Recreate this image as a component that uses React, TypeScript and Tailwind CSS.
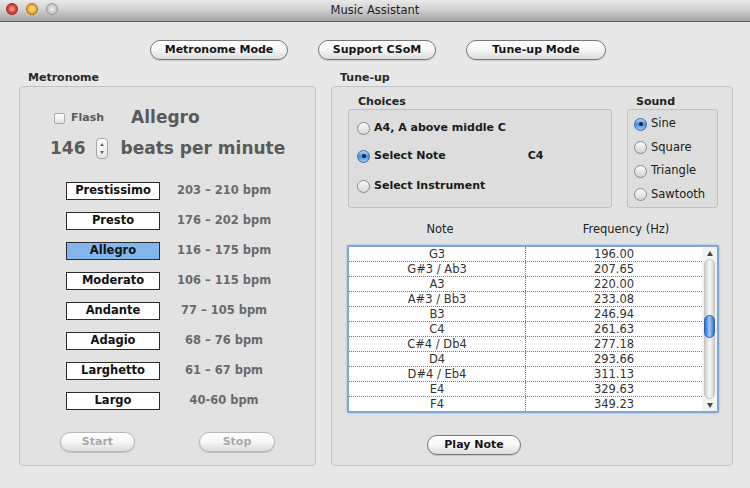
import React from "react";

const tempos: [string, string, boolean?][] = [
  ["Prestissimo", "203 – 210 bpm"],
  ["Presto", "176 – 202 bpm"],
  ["Allegro", "116 – 175 bpm", true],
  ["Moderato", "106 – 115 bpm"],
  ["Andante", "77 – 105 bpm"],
  ["Adagio", "68 – 76 bpm"],
  ["Larghetto", "61 – 67 bpm"],
  ["Largo", "40-60 bpm"],
];

const notes: [string, string][] = [
  ["G3", "196.00"],
  ["G#3 / Ab3", "207.65"],
  ["A3", "220.00"],
  ["A#3 / Bb3", "233.08"],
  ["B3", "246.94"],
  ["C4", "261.63"],
  ["C#4 / Db4", "277.18"],
  ["D4", "293.66"],
  ["D#4 / Eb4", "311.13"],
  ["E4", "329.63"],
  ["F4", "349.23"],
];

function AquaButton({
  children,
  className,
  disabled,
}: {
  children: React.ReactNode;
  className: string;
  disabled?: boolean;
}) {
  return (
    <div
      className={
        "h-[20px] rounded-full border flex items-center justify-center text-[11px] font-bold bg-linear-to-b from-white via-[#f6f6f6] to-[#dcdcdc] shadow-[0_1px_1px_rgba(0,0,0,0.15)] " +
        (disabled ? "border-[#b8b8b8] text-[#a9a9a9] " : "border-[#777777] text-[#151515] ") +
        className
      }
    >
      {children}
    </div>
  );
}

function Radio({ on }: { on?: boolean }) {
  if (on) {
    return (
      <div className="w-[13px] h-[13px] shrink-0 rounded-full border border-[#3b68a6] bg-linear-to-b from-[#b6d6f8] via-[#4a8fe0] to-[#9cc8f4] flex items-center justify-center">
        <div className="w-[4px] h-[4px] rounded-full bg-[#17263b]" />
      </div>
    );
  }
  return (
    <div className="w-[13px] h-[13px] shrink-0 rounded-full border border-[#8a8a8a] bg-linear-to-b from-[#fbfbfb] to-[#d6d6d6]" />
  );
}

export default function App() {
  return (
    <div className="w-[750px] h-[488px] bg-[#e8e8e8] flex flex-col overflow-hidden font-['DejaVu_Sans',sans-serif] select-none">
      {/* Title bar */}
      <div className="h-[22px] shrink-0 relative flex items-center justify-center bg-linear-to-b from-[#e9e9e9] via-[#cdcdcd] to-[#a4a4a4] border-b border-[#5c5c5c]">
        <div className="absolute left-[6px] top-[3px] flex gap-[8px]">
          <div className="w-[12px] h-[12px] rounded-full border border-[#9a2a25] bg-radial from-[#ffb0a8] via-[#e0443c] to-[#b21f18]" />
          <div className="w-[12px] h-[12px] rounded-full border border-[#a87212] bg-radial from-[#ffe8a0] via-[#f2b33a] to-[#cc8410]" />
          <div className="w-[12px] h-[12px] rounded-full border border-[#9a9a9a] bg-radial from-[#f0f0f0] via-[#cfcfcf] to-[#a9a9a9]" />
        </div>
        <span className="text-[11.5px] text-[#1e1e1e]">Music Assistant</span>
      </div>

      {/* Mode buttons */}
      <div className="mt-[18px] ml-[150px] flex gap-[30px]">
        <AquaButton className="w-[138px]">Metronome Mode</AquaButton>
        <AquaButton className="w-[118px]">Support CSoM</AquaButton>
        <AquaButton className="w-[140px]">Tune-up Mode</AquaButton>
      </div>

      {/* Panels */}
      <div className="mt-[11px] flex">
        {/* Metronome */}
        <div className="ml-[19px] w-[297px] flex flex-col">
          <div className="h-[14px] ml-[9px] text-[11px] font-bold text-[#2a2a2a] leading-[14px]">Metronome</div>
          <div className="mt-[1px] h-[380px] rounded-[4px] border border-[#c3c3c3] bg-[#e2e2e2] flex flex-col">
            <div className="mt-[21px] h-[20px] flex items-center">
              <div className="ml-[34px] w-[11px] h-[11px] rounded-[2px] border border-[#a9a9a9] bg-linear-to-b from-white to-[#e2e2e2]" />
              <span className="ml-[6px] text-[11px] font-bold text-[#5a5a5a]">Flash</span>
              <span className="ml-[27px] text-[17px] font-bold text-[#5a5a5a]">Allegro</span>
            </div>
            <div className="mt-[10px] h-[21px] flex items-center">
              <span className="ml-[30px] text-[17px] font-bold text-[#5a5a5a]">146</span>
              <div className="ml-[10px] w-[12px] h-[21px] rounded-[4px] border border-[#a5a5a5] bg-linear-to-b from-white to-[#e4e4e4] flex flex-col items-center justify-center gap-[5px]">
                <div className="w-0 h-0 border-l-[2.5px] border-r-[2.5px] border-b-[3px] border-l-transparent border-r-transparent border-b-[#666]" />
                <div className="w-0 h-0 border-l-[2.5px] border-r-[2.5px] border-t-[3px] border-l-transparent border-r-transparent border-t-[#666]" />
              </div>
              <span className="ml-[13px] text-[17px] font-bold text-[#5a5a5a]">beats per minute</span>
            </div>
            <div className="mt-[23px] flex flex-col gap-[12px]">
              {tempos.map(([name, range, sel]) => (
                <div key={name} className="h-[18px] flex items-center">
                  <div
                    className={
                      "ml-[46px] w-[94px] h-[18px] border border-[#2b2b2b] flex items-center justify-center text-[11.5px] font-bold text-[#111] " +
                      (sel ? "bg-[#84b6ee]" : "bg-white")
                    }
                  >
                    {name}
                  </div>
                  <div className="ml-[9px] w-[110px] text-center text-[11.5px] font-bold text-[#6a6a6a]">{range}</div>
                </div>
              ))}
            </div>
            <div className="mt-[22px] flex">
              <AquaButton disabled className="ml-[40px] w-[75px] h-[19px]">Start</AquaButton>
              <AquaButton disabled className="ml-[64px] w-[76px] h-[19px]">Stop</AquaButton>
            </div>
          </div>
        </div>

        {/* Tune-up */}
        <div className="ml-[15px] w-[402px] flex flex-col">
          <div className="h-[14px] ml-[9px] text-[11px] font-bold text-[#2a2a2a] leading-[14px]">Tune-up</div>
          <div className="mt-[1px] h-[380px] rounded-[4px] border border-[#c3c3c3] bg-[#e2e2e2] flex flex-col">
            <div className="mt-[7px] flex">
              {/* Choices */}
              <div className="ml-[16px] w-[264px] flex flex-col">
                <div className="h-[15px] ml-[10px] text-[11px] font-bold text-[#222] leading-[15px]">Choices</div>
                <div className="h-[99px] rounded-[3px] border border-[#c0c0c0] bg-[#dddddd] flex flex-col">
                  <div className="mt-[11px] h-[14px] flex items-center">
                    <div className="ml-[8px]"><Radio /></div>
                    <span className="ml-[4px] text-[11px] font-bold text-[#1a1a1a]">A4, A above middle C</span>
                  </div>
                  <div className="mt-[14px] h-[14px] flex items-center">
                    <div className="ml-[8px]"><Radio on /></div>
                    <span className="ml-[4px] text-[11px] font-bold text-[#1a1a1a]">Select Note</span>
                    <span className="ml-[82px] text-[11px] font-bold text-[#1a1a1a]">C4</span>
                  </div>
                  <div className="mt-[16px] h-[14px] flex items-center">
                    <div className="ml-[8px]"><Radio /></div>
                    <span className="ml-[4px] text-[11px] font-bold text-[#1a1a1a]">Select Instrument</span>
                  </div>
                </div>
              </div>
              {/* Sound */}
              <div className="ml-[15px] w-[91px] flex flex-col">
                <div className="h-[15px] ml-[9px] text-[11px] font-bold text-[#222] leading-[15px]">Sound</div>
                <div className="h-[99px] rounded-[3px] border border-[#c0c0c0] bg-[#dddddd] flex flex-col gap-[9.5px] pt-[7px]">
                  {["Sine", "Square", "Triangle", "Sawtooth"].map((s, i) => (
                    <div key={s} className="h-[14px] flex items-center">
                      <div className="ml-[6px]"><Radio on={i === 0} /></div>
                      <span className="ml-[4px] text-[11.5px] text-[#1a1a1a]">{s}</span>
                    </div>
                  ))}
                </div>
              </div>
            </div>

            {/* Table header */}
            <div className="mt-[14px] ml-[15px] w-[372px] h-[14px] flex text-[11.5px] text-[#222] leading-[14px]">
              <div className="w-[186px] text-center">Note</div>
              <div className="flex-1 text-center">Frequency (Hz)</div>
            </div>

            {/* Table */}
            <div className="mt-[9px] ml-[15px] w-[372px] h-[168px] border-2 border-[#7ea6d8] rounded-[2px] shadow-[0_0_2px_rgba(80,130,200,0.6)] bg-white flex overflow-hidden">
              <div className="flex-1 flex flex-col overflow-hidden">
                {notes.map(([n, f]) => (
                  <div key={n} className="h-[15px] shrink-0 flex border-b border-dotted border-[#7a7a7a] text-[11.5px] text-[#333] leading-[15px]">
                    <div className="w-[177px] text-center border-r border-dotted border-[#7a7a7a]">{n}</div>
                    <div className="flex-1 text-center">{f}</div>
                  </div>
                ))}
              </div>
              <div className="w-[15px] shrink-0 bg-[#f2f2f2] flex flex-col items-center">
                <div className="h-[12px] flex items-center justify-center">
                  <div className="w-0 h-0 border-l-[3px] border-r-[3px] border-b-[5px] border-l-transparent border-r-transparent border-b-[#444]" />
                </div>
                <div className="flex-1 w-[11px] rounded-full bg-linear-to-r from-[#cfcfcf] via-[#f8f8f8] to-[#d2d2d2] border border-[#c4c4c4] relative">
                  <div className="absolute left-[-1px] top-[55px] w-[11px] h-[23px] rounded-full border border-[#2a5ea8] bg-linear-to-r from-[#2f6fd0] via-[#9fcaf8] to-[#2f6fd0]" />
                </div>
                <div className="h-[12px] flex items-center justify-center">
                  <div className="w-0 h-0 border-l-[3px] border-r-[3px] border-t-[5px] border-l-transparent border-r-transparent border-t-[#444]" />
                </div>
              </div>
            </div>

            <div className="mt-[22px] flex">
              <AquaButton className="ml-[95px] w-[94px]">Play Note</AquaButton>
            </div>
          </div>
        </div>
      </div>
    </div>
  );
}
